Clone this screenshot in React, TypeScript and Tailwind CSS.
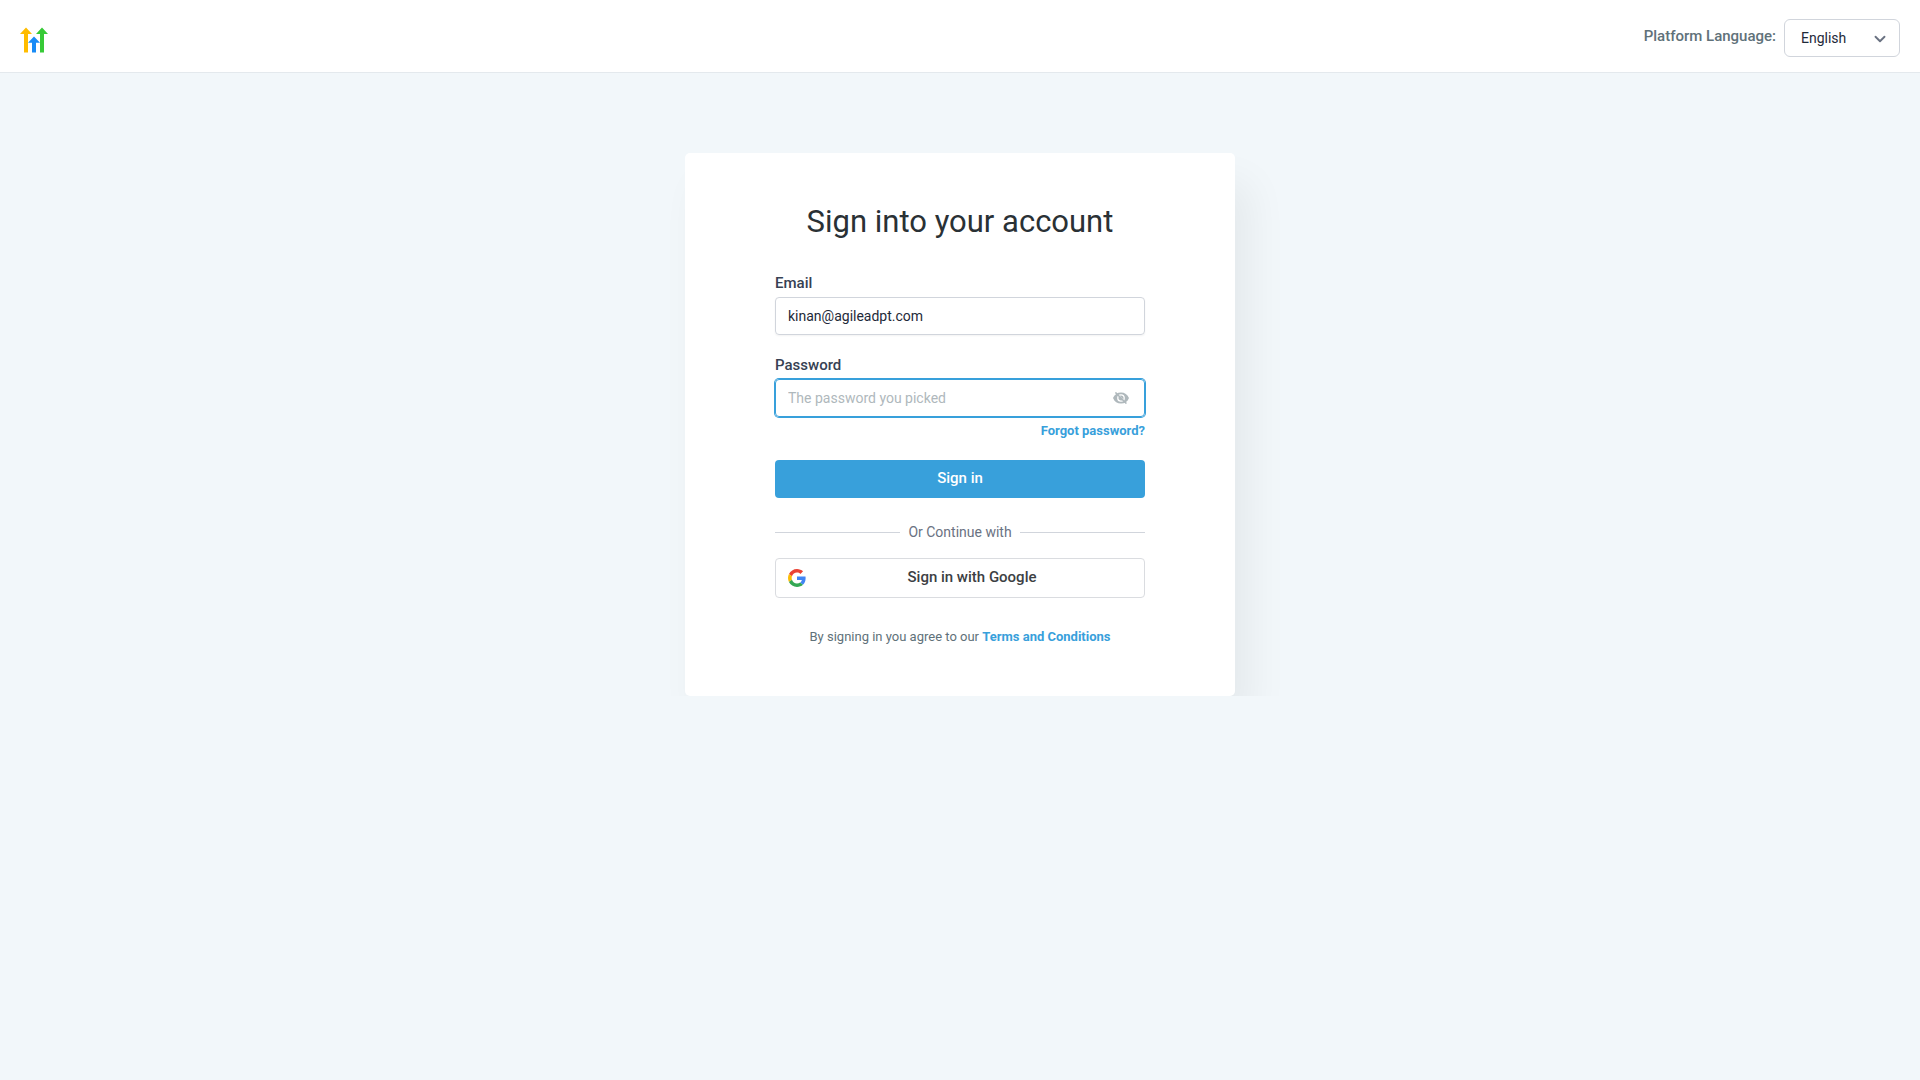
import { useState } from 'react';
import { ChevronDown } from 'lucide-react';

function Logo() {
  return (
    <svg viewBox="0 0 28 26" className="w-7 h-[26px]" aria-hidden="true">
      <path d="M6 .5l6 6.4H8v18.6H4V6.9H0z" fill="#ffbc00" />
      <path d="M22 .5l6 6.4h-4v18.6h-4V6.9h-4z" fill="#37ca37" />
      <path d="M14 9.5l6 6.2h-4v9.8h-4v-9.8H8z" fill="#188bf6" />
    </svg>
  );
}

function GoogleIcon() {
  return (
    <svg viewBox="0 0 48 48" className="w-[18px] h-[18px] shrink-0" aria-hidden="true">
      <path fill="#EA4335" d="M24 9.5c3.54 0 6.71 1.22 9.21 3.6l6.85-6.85C35.9 2.38 30.47 0 24 0 14.62 0 6.51 5.38 2.56 13.22l7.98 6.19C12.43 13.72 17.74 9.5 24 9.5z" />
      <path fill="#4285F4" d="M46.98 24.55c0-1.57-.15-3.09-.38-4.55H24v9.02h12.94c-.58 2.96-2.26 5.48-4.78 7.18l7.73 6c4.51-4.18 7.09-10.36 7.09-17.65z" />
      <path fill="#FBBC05" d="M10.53 28.59c-.48-1.45-.76-2.99-.76-4.59s.27-3.14.76-4.59l-7.98-6.19C.92 16.46 0 20.12 0 24c0 3.88.92 7.54 2.56 10.78l7.97-6.19z" />
      <path fill="#34A853" d="M24 48c6.48 0 11.93-2.13 15.89-5.81l-7.73-6c-2.15 1.45-4.92 2.3-8.16 2.3-6.26 0-11.57-4.22-13.47-9.91l-7.98 6.19C6.51 42.62 14.62 48 24 48z" />
    </svg>
  );
}

function EyeOffIcon() {
  return (
    <svg viewBox="0 0 16 12" className="w-4 h-3" aria-hidden="true">
      <path d="M0 6C1.4 2.4 4.4.4 8 .4S14.6 2.4 16 6c-1.4 3.6-4.4 5.6-8 5.6S1.4 9.6 0 6z" fill="#afb8bc" />
      <circle cx="8" cy="6" r="3.2" fill="none" stroke="#fff" strokeWidth="1.3" />
      <path d="M5.6 2.8l5.2 5.4" stroke="#fff" strokeWidth=".7" />
      <path d="M2.4.4l11 11.2" stroke="#afb8bc" strokeWidth="1.5" />
    </svg>
  );
}

export default function App() {
  const [email, setEmail] = useState('kinan@agileadpt.com');
  const [password, setPassword] = useState('');
  const [showPassword, setShowPassword] = useState(false);
  const [language, setLanguage] = useState('English');

  return (
    <div className="min-h-screen bg-[#f2f7fa] font-[Roboto,sans-serif] text-sm text-[#2a3135]">
      <header className="flex items-center justify-between h-[73px] px-5 bg-white border-b border-[#e4e9ed]">
        <div className="pt-2">
          <Logo />
        </div>
        <div className="flex items-center gap-2 pt-1">
          <label htmlFor="language" className="pb-0.5 text-[15px] font-medium text-[#607179]">
            Platform Language:
          </label>
          <div className="relative">
            <select
              id="language"
              value={language}
              onChange={(e) => setLanguage(e.target.value)}
              className="block appearance-none w-[116px] h-[38px] pl-4 pr-8 rounded-md border border-gray-300 bg-white text-sm text-gray-800"
            >
              <option>English</option>
              <option>Español</option>
              <option>Français</option>
            </select>
            <ChevronDown
              strokeWidth={2.5}
              className="absolute right-[11px] top-[11px] w-[18px] h-[18px] text-gray-500 pointer-events-none"
            />
          </div>
        </div>
      </header>

      {/* Sign in card, the section cuts its shadow at the bottom */}
      <main className="flex justify-center pt-20 overflow-hidden">
        <form
          onSubmit={(e) => e.preventDefault()}
          className="w-full max-w-[550px] px-[90px] pt-[49px] pb-[49px] rounded-[5px] bg-white shadow-[15px_30px_40px_rgba(0,0,0,0.06)]"
        >
          <h1 className="text-center text-[31px] leading-10">Sign into your account</h1>

          <label htmlFor="email" className="block mt-[31px] text-[15px] leading-5 font-medium text-gray-700">
            Email
          </label>
          <input
            id="email"
            type="email"
            value={email}
            onChange={(e) => setEmail(e.target.value)}
            className="block w-full h-[38px] mt-1 px-3 rounded border border-gray-300 shadow-xs text-gray-800 focus:outline-none"
          />

          <label htmlFor="password" className="block mt-5 text-[15px] leading-5 font-medium text-gray-700">
            Password
          </label>
          <div className="relative mt-1">
            <input
              id="password"
              type={showPassword ? 'text' : 'password'}
              placeholder="The password you picked"
              value={password}
              onChange={(e) => setPassword(e.target.value)}
              className="block w-full h-[38px] pl-3 pr-10 rounded border border-[#38a0db] ring-1 ring-[#38a0db] text-gray-800 placeholder:text-[#afb8bc] focus:outline-none"
            />
            <button
              type="button"
              aria-label="Show password"
              onClick={() => setShowPassword(!showPassword)}
              className="absolute right-4 top-[13px]"
            >
              <EyeOffIcon />
            </button>
          </div>
          <div className="mt-1 text-right text-[13px] leading-5">
            <a href="#" className="font-bold text-[#38a0db]">
              Forgot password?
            </a>
          </div>

          <button
            type="submit"
            className="block w-full h-[38px] mt-[19px] rounded bg-[#38a0db] text-[15px] font-medium text-white"
          >
            Sign in
          </button>

          <div className="flex items-center gap-2 mt-6 leading-5 text-gray-500">
            <span className="flex-1 h-px bg-gray-300" />
            Or Continue with
            <span className="flex-1 h-px bg-gray-300" />
          </div>

          <button
            type="button"
            className="flex items-center w-full h-10 mt-4 px-3 rounded border border-[#dadce0] text-[15px] font-medium text-[#3c4043]"
          >
            <GoogleIcon />
            <span className="flex-1 pl-1.5">Sign in with Google</span>
          </button>

          <p className="mt-[29px] text-center text-[13px] leading-5 text-[#607179]">
            By signing in you agree to our{' '}
            <a href="#" className="font-bold text-[#38a0db]">
              Terms and Conditions
            </a>
          </p>
        </form>
      </main>
    </div>
  );
}
